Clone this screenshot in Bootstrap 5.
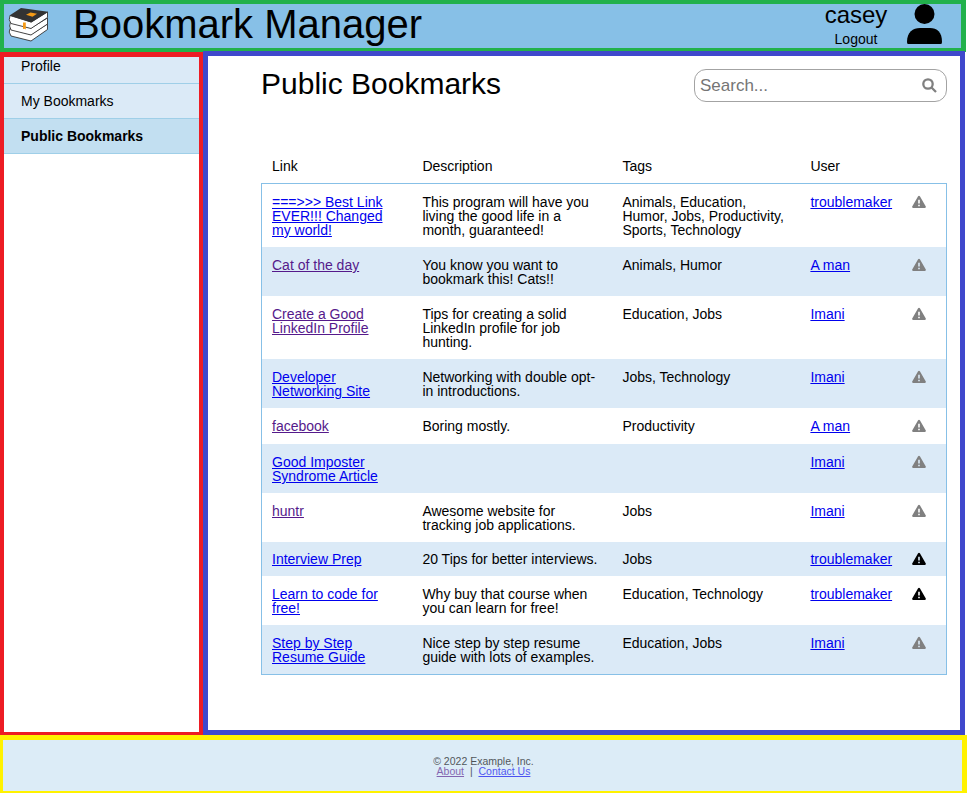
<!DOCTYPE html>
<html lang="en">
<head>
<meta charset="utf-8">
<title>Bookmark Manager</title>
<link href="https://cdn.jsdelivr.net/npm/bootstrap@5.3.0/dist/css/bootstrap.min.css" rel="stylesheet">
<style>
body{font-family:"Liberation Sans",Arial,sans-serif;color:#000;height:793px;overflow:hidden;font-size:14px;line-height:14px;background:#fff}
.app-head{height:52px;width:966px;background:#87c0e7;border:4px solid #22b14c;border-right-width:5px}
.app-logo{width:44px;height:40px;margin-left:2px}
.app-title{font-size:40px;line-height:44px;margin:-2px 0 0 23px;font-weight:400;white-space:nowrap}
.user-box{width:90px;margin-right:6px}
.user-name{font-size:24px;line-height:24px;margin-top:-1px}
.logout{line-height:16px;margin-top:4px}
.person{width:36px;height:40px;margin-right:18px}
.side{width:203px;height:683px;border:4px solid #ed1c24;border-top-width:5px;border-bottom-width:3px}
.side a{height:35px;padding:0 0 0 17px;color:#000;text-decoration:none;background:#dbeaf7;border-bottom:1px solid #9fcfe8}
.side a:first-child{height:27px;padding-bottom:8px}
.side a.current{background:#c2dff1;font-weight:700}
.main{width:762px;height:684px;margin-top:-1px;border:5px solid #3f48cc;padding:13px 13px 0 53px}
.page-title{font-size:30px;line-height:33px;margin:-2px 0 0;font-weight:400}
.search{width:253px;height:33px;border:1px solid #a3a3a3;border-radius:12px;padding:0 9px 0 5px;color:#757575;font-size:17px}
.bm-row{display:grid;grid-template-columns:150.4px 200px 188px 102px 1fr}
.heads{margin-top:57px;height:24px;padding-left:11px}
.rows{border:1px solid #87c0e7}
.rows>.bm-row{padding:11px 0 0 10px;height:49px}
.rows>.bm-row:nth-child(even){background:#dbeaf7}
.rows>.one-line{height:36px}.rows>.one-line-tight{height:34px;padding-top:10px}.rows>.three-line{height:63px}
.rows a,.foot a{color:#00e;text-decoration:underline}
.rows a.seen,.foot a.seen{color:#551a8b}
.warn{width:14px;height:14px;fill:#808080}
.warn.on{fill:#000}
.foot{height:58px;border:5px solid #fff200;border-left-width:3px;border-bottom-width:2px;background:#dcecf7;font-size:10.5px;line-height:10px;padding:16px 0 0 2px}
.foot>div{opacity:.65}
</style>
<script src="https://cdn.jsdelivr.net/npm/bootstrap@5.3.0/dist/js/bootstrap.bundle.min.js"></script>
</head>
<body>
<svg class="d-none"><symbol id="w" viewBox="0 0 14 14"><path fill-rule="evenodd" d="M6.1 1.2Q7 .2 7.900 1.200L13.800 11.500Q14.200 12.900 13 13H1Q-.2 12.900 .2 11.500ZM6.200 4.700V8.500H7.800V4.700ZM6.200 9.700V11.200H7.800V9.700Z"/></symbol></svg>
<header class="app-head d-flex">
<svg class="app-logo" viewBox="0 0 44 40"><g stroke="#333" stroke-width=".9" fill="#fff" stroke-linejoin="round"><path d="M4 24.500L25 30.500L41.500 20V25.500L25 37L5 32Q2 28 4 24.500Z"/><path d="M4.500 18L25 24L41.500 14V20L25 31L5 26Q2.500 22 4.500 18Z"/><path d="M4 11.500L25 18L41.500 8V13.500L25 24.500L5 19.500Q2 16 4 11.500Z"/></g><path d="M3.500 11.500L15 4L42 7.800L25.500 18.500Z" fill="#333"/><path d="M20 10.800L24.500 8.500L31 9.800L26.500 12.800Z" fill="#f59a16"/><path d="M17 18.500H19.800V25.500L18.400 24.800L17 25Z" fill="#f59a16"/></svg>
<h1 class="app-title">Bookmark Manager</h1>
<div class="user-box text-center ms-auto"><div class="user-name">casey</div><div class="logout">Logout</div></div>
<svg class="person" viewBox="0 0 36 40"><circle cx="17.500" cy="10" r="10"/><path d="M1 40Q0 40 0 38C0 28 6 24 13 24H23C30 24 35 28 35 38Q35 40 34 40Z"/></svg>
</header>
<div class="d-flex">
<nav class="side d-flex flex-column">
<a class="d-flex align-items-center" href="#">Profile</a><a class="d-flex align-items-center" href="#">My Bookmarks</a><a class="d-flex align-items-center current" href="#">Public Bookmarks</a>
</nav>
<main class="main">
<div class="d-flex justify-content-between"><h2 class="page-title">Public Bookmarks</h2>
<div class="search d-flex align-items-center justify-content-between"><span>Search...</span><svg width="15" height="15" viewBox="0 0 15 15" fill="none" stroke="#808080" stroke-width="2.300"><circle cx="6" cy="6" r="4.700"/><path d="M9.500 9.500L14 14"/></svg></div></div>
<div class="bm-row heads"><span>Link</span><span>Description</span><span>Tags</span><span>User</span></div>
<div class="rows">
<div class="bm-row three-line"><span><a href="#">===&gt;&gt;&gt; Best Link<br>EVER!!! Changed<br>my world!</a></span><span>This program will have you<br>living the good life in a<br>month, guaranteed!</span><span>Animals, Education,<br>Humor, Jobs, Productivity,<br>Sports, Technology</span><span><a href="#">troublemaker</a></span><svg class="warn"><use href="#w"/></svg></div>
<div class="bm-row"><span><a class="seen" href="#">Cat of the day</a></span><span>You know you want to<br>bookmark this! Cats!!</span><span>Animals, Humor</span><span><a href="#">A man</a></span><svg class="warn"><use href="#w"/></svg></div>
<div class="bm-row three-line"><span><a class="seen" href="#">Create a Good<br>LinkedIn Profile</a></span><span>Tips for creating a solid<br>LinkedIn profile for job<br>hunting.</span><span>Education, Jobs</span><span><a href="#">Imani</a></span><svg class="warn"><use href="#w"/></svg></div>
<div class="bm-row"><span><a href="#">Developer<br>Networking Site</a></span><span>Networking with double opt-<br>in introductions.</span><span>Jobs, Technology</span><span><a href="#">Imani</a></span><svg class="warn"><use href="#w"/></svg></div>
<div class="bm-row one-line"><span><a class="seen" href="#">facebook</a></span><span>Boring mostly.</span><span>Productivity</span><span><a href="#">A man</a></span><svg class="warn"><use href="#w"/></svg></div>
<div class="bm-row"><span><a href="#">Good Imposter<br>Syndrome Article</a></span><span></span><span></span><span><a href="#">Imani</a></span><svg class="warn"><use href="#w"/></svg></div>
<div class="bm-row"><span><a class="seen" href="#">huntr</a></span><span>Awesome website for<br>tracking job applications.</span><span>Jobs</span><span><a href="#">Imani</a></span><svg class="warn"><use href="#w"/></svg></div>
<div class="bm-row one-line-tight"><span><a href="#">Interview Prep</a></span><span>20 Tips for better interviews.</span><span>Jobs</span><span><a href="#">troublemaker</a></span><svg class="warn on"><use href="#w"/></svg></div>
<div class="bm-row"><span><a href="#">Learn to code for<br>free!</a></span><span>Why buy that course when<br>you can learn for free!</span><span>Education, Technology</span><span><a href="#">troublemaker</a></span><svg class="warn on"><use href="#w"/></svg></div>
<div class="bm-row"><span><a href="#">Step by Step<br>Resume Guide</a></span><span>Nice step by step resume<br>guide with lots of examples.</span><span>Education, Jobs</span><span><a href="#">Imani</a></span><svg class="warn"><use href="#w"/></svg></div>
</div>
</main>
</div>
<footer class="foot text-center"><div>© 2022 Example, Inc.<br><a class="seen" href="#">About</a> &nbsp;|&nbsp; <a href="#">Contact Us</a></div></footer>
</body>
</html>
